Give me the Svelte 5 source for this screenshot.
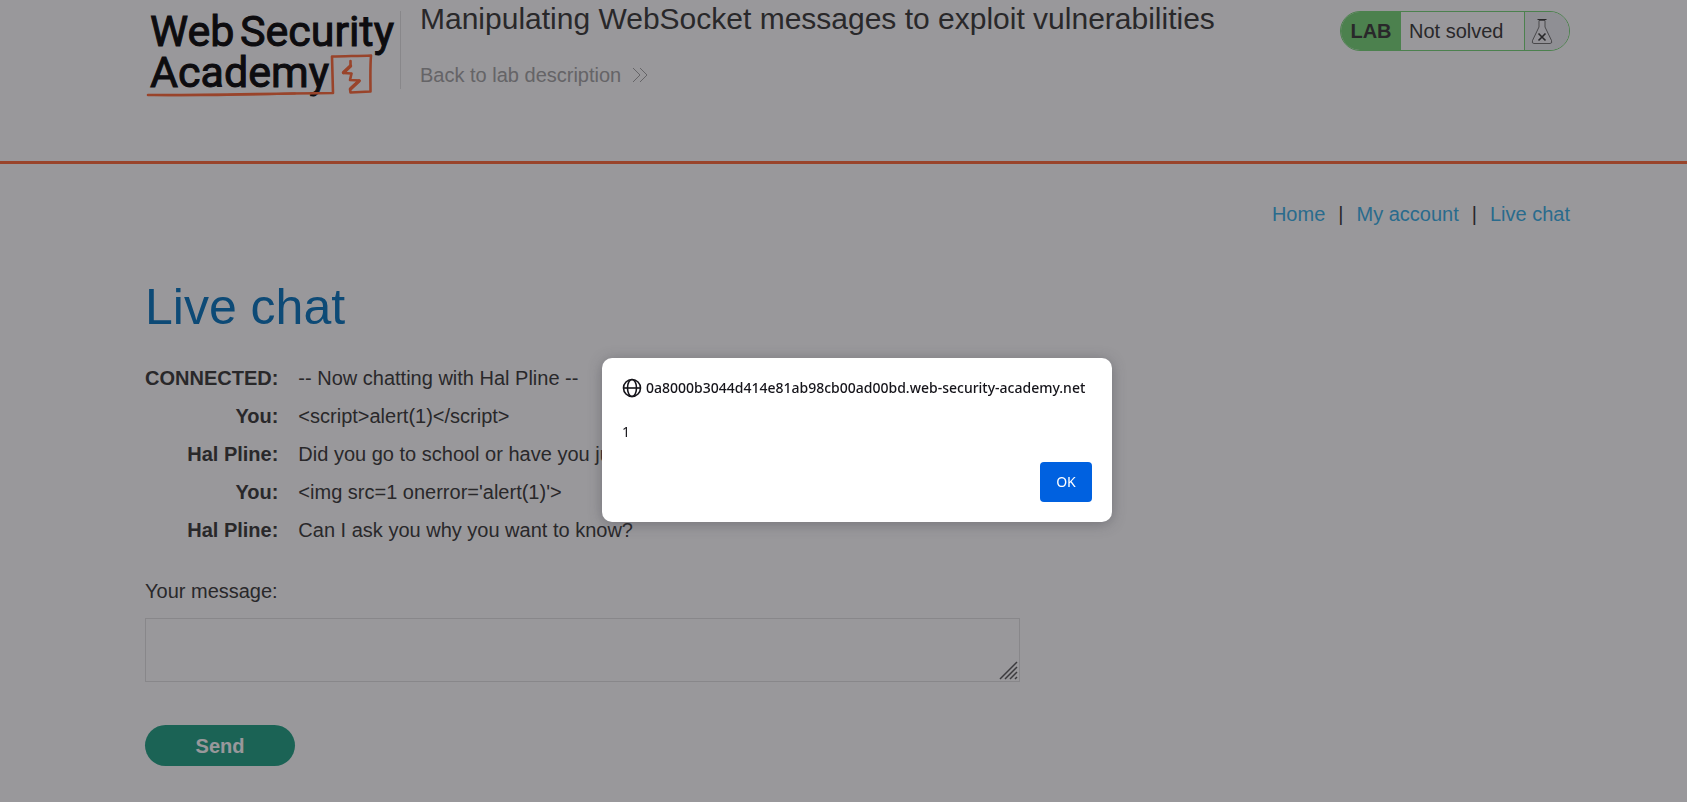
<script>
  const links = ['Home', 'My account', 'Live chat'];
  const messages = [
    { from: 'CONNECTED:', text: '-- Now chatting with Hal Pline --' },
    { from: 'You:', text: '<' + 'script>alert(1)</' + 'script>' },
    { from: 'Hal Pline:', text: 'Did you go to school or have you just' },
    { from: 'You:', text: "<img src=1 onerror='alert(1)'>" },
    { from: 'Hal Pline:', text: 'Can I ask you why you want to know?' }
  ];
  let message = $state('');
</script>

<div class="page">
  <header>
    <a class="logo" href="#academy" aria-label="Web Security Academy">
      <svg width="256" height="100" viewBox="0 0 256 100">
        <g class="logo-text">
          <text x="5" y="46">Web</text>
          <text x="95" y="46">Security</text>
          <text x="5" y="87">Academy</text>
        </g>
        <g fill="none" stroke="#ff6633" stroke-linejoin="round" stroke-linecap="round">
          <path d="M3 95C60 95.500 120 93.500 188 93L187 56.500C200 56 213 56 226 55.500C225 68 225.500 80 225.500 91.500L205.500 92.500L205 89L214.500 80.500L205 80L206.500 73.500L198.500 73L205.500 66V61" stroke-width="2.600" />
          <path d="M8 95C60 96 110 94.500 150 93.500" stroke-width="2" />
          <path d="M198.500 72.500L205.500 66" stroke-width="3.400" />
          <path d="M206 88.500L214 81" stroke-width="3.400" />
        </g>
      </svg>
    </a>
    <div class="title">
      <h2>Manipulating WebSocket messages to exploit vulnerabilities</h2>
      <a class="back" href="#description">
        Back to lab description
        <svg width="16" height="16" viewBox="0 0 16 16" fill="none" stroke="currentColor" aria-hidden="true">
          <path d="M1 1L8 8L1 15M8 1L15 8L8 15" />
        </svg>
      </a>
    </div>
    <div class="status">
      <strong>LAB</strong>
      <span class="state">Not solved</span>
      <span class="flask">
        <svg width="22" height="27" viewBox="0 0 22 27" fill="none" stroke="#333332" aria-hidden="true">
          <path d="M8 2.500V9L1.500 22.500Q.5 25.500 3 25.500H19Q21.500 25.500 20.500 22.500L14 9V2.500Z" fill="#fff" fill-opacity=".4" stroke-width=".7" />
          <path d="M6.500 1.500H15.500" />
          <path d="M7.500 15.500L14.500 22.500M14.500 15.500L7.500 22.500" stroke-width="1.600" />
        </svg>
      </span>
    </div>
  </header>

  <main>
    <nav>
      {#each links as link, i}
        {#if i > 0}<span>|</span>{/if}
        <a href="#{link}">{link}</a>
      {/each}
    </nav>
    <h1>Live chat</h1>
    <table>
      <tbody>
        {#each messages as m}
          <tr><th scope="row">{m.from}</th><td>{m.text}</td></tr>
        {/each}
      </tbody>
    </table>
    <form onsubmit={(e) => e.preventDefault()}>
      <label for="message">Your message:</label>
      <div class="field">
        <textarea id="message" bind:value={message}></textarea>
        <svg class="grip" width="19" height="19" viewBox="0 0 19 19" stroke="#555" stroke-width="1.500" aria-hidden="true">
          <path d="M1 18L18 1M6 18L18 6M11 18L18 11M16 18L18 16" />
        </svg>
      </div>
      <button class="send" type="submit">Send</button>
    </form>
  </main>
</div>

<div class="backdrop">
  <div class="dialog" role="alertdialog" aria-modal="true" aria-labelledby="origin" aria-describedby="alert-text">
    <div class="origin">
      <svg width="20" height="20" viewBox="0 0 20 20" fill="none" stroke="#15141a" stroke-width="1.600" aria-hidden="true">
        <circle cx="10" cy="10" r="8.500" />
        <ellipse cx="10" cy="10" rx="4.500" ry="8.500" />
        <path d="M1.500 10H18.500" />
      </svg>
      <span id="origin">0a8000b3044d414e81ab98cb00ad00bd.web-security-academy.net</span>
    </div>
    <p id="alert-text">1</p>
    <button type="button">OK</button>
  </div>
</div>

<style>
  :global(body) {
    background: #fff;
  }
  .page {
    min-height: 100vh;
    color: #333332;
    font: 20px/24px "Liberation Sans", Arial, sans-serif;
  }
  a {
    text-decoration: none;
  }
  header {
    display: flex;
    align-items: flex-start;
    box-sizing: border-box;
    min-height: 164px;
    padding: 0 117px 0 145px;
    border-bottom: 3px solid #ff6633;
  }
  .logo {
    display: block;
    height: 100px;
  }
  .logo-text {
    fill: #000;
    stroke: #000;
    stroke-width: 1;
    font: 43px Roboto, sans-serif;
  }
  .title {
    flex: 1;
    position: relative;
    padding: 1px 0 0 19px;
  }
  .title::before {
    content: "";
    position: absolute;
    left: -1px;
    top: 11px;
    width: 1px;
    height: 78px;
    background: #e0e0e0;
  }
  h2 {
    margin: 0 0 26px;
    font-size: 30px;
    line-height: 36px;
    font-weight: 400;
  }
  .back {
    display: inline-flex;
    align-items: center;
    gap: 11px;
    color: #a0a0a0;
  }
  .status {
    display: flex;
    box-sizing: border-box;
    width: 230px;
    height: 40px;
    margin-top: 11px;
    border: 1px solid #73d673;
    border-radius: 20px;
    overflow: hidden;
    line-height: 38px;
  }
  .status strong {
    width: 60px;
    background: #73d673;
    text-align: center;
  }
  .state {
    flex: 1;
    padding-left: 8px;
  }
  .flask {
    display: flex;
    align-items: center;
    width: 38px;
    padding-left: 6px;
    border-left: 1px solid #73d673;
    background: #edeff2;
  }
  main {
    padding: 38px 117px 36px 145px;
  }
  nav {
    display: flex;
    justify-content: flex-end;
    gap: 13px;
  }
  nav a {
    color: #33aee6;
  }
  h1 {
    margin: 51px 0 22px;
    color: #0071bc;
    font-size: 50px;
    line-height: 60px;
    font-weight: 400;
  }
  table {
    border-collapse: collapse;
  }
  th,
  td {
    padding: 7px 0;
    text-align: left;
  }
  th {
    padding-right: 20px;
    text-align: right;
  }
  label {
    display: block;
    margin: 30px 0 15px;
  }
  .field {
    position: relative;
    width: 875px;
    max-width: 100%;
  }
  textarea {
    display: block;
    box-sizing: border-box;
    width: 100%;
    height: 64px;
    padding: 8px;
    border: 1px solid #e0e0e0;
    background: #fff;
    font: inherit;
    resize: none;
  }
  .grip {
    position: absolute;
    right: 2px;
    bottom: 2px;
  }
  .send {
    display: block;
    width: 150px;
    height: 41px;
    margin-top: 43px;
    border: 0;
    border-radius: 21px;
    background: #1a9e80;
    color: #fff;
    font: bold 20px/24px "Liberation Sans", Arial, sans-serif;
  }
  .backdrop {
    position: fixed;
    inset: 0;
    display: flex;
    align-items: center;
    justify-content: center;
    padding: 78px 0 0 27px;
    background: rgba(28, 27, 34, 0.45);
  }
  .dialog {
    display: flex;
    flex-direction: column;
    box-sizing: border-box;
    min-width: 510px;
    padding: 20px;
    border-radius: 10px;
    background: #fff;
    box-shadow: 0 2px 14px rgba(58, 57, 68, 0.4);
    color: #15141a;
    font: 14px/20px "Noto Sans", sans-serif;
  }
  .origin {
    display: flex;
    align-items: center;
    gap: 4px;
    font-weight: 500;
  }
  .dialog p {
    margin: 24px 0 20px;
  }
  .dialog button {
    align-self: flex-end;
    width: 52px;
    height: 40px;
    padding: 0;
    border: 0;
    border-radius: 4px;
    background: #0061e0;
    color: #fff;
    font: inherit;
  }
</style>
